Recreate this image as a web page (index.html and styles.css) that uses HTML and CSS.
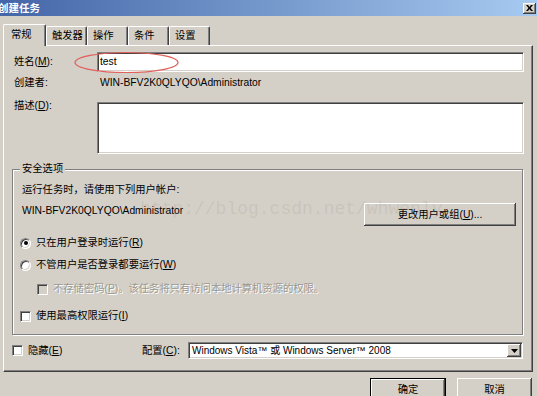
FILE: index.html
```html
<!DOCTYPE html>
<html lang="zh-CN">
<head>
    <meta charset="UTF-8">
    <meta name="viewport" content="width=device-width, initial-scale=1.0">
    <title>创建任务</title>
    <link rel="stylesheet" href="styles.css">
</head>
<body>
    <div class="window">
        <div class="titlebar">
            <span class="title">创建任务</span>
            <button class="close-btn" aria-label="关闭">
                <svg width="7" height="6" viewBox="0 0 7 6"><path d="M0 0h2l1.5 2L5 0h2L4.5 3 7 6H5L3.5 4 2 6H0l2.5-3z" fill="#000"/></svg>
            </button>
        </div>

        <div class="tabs">
            <div class="tab active">常规</div>
            <div class="tab">触发器</div>
            <div class="tab">操作</div>
            <div class="tab">条件</div>
            <div class="tab">设置</div>
        </div>

        <div class="panel">
            <div class="row name-row">
                <label class="label">姓名(<u>M</u>):</label>
                <div class="textbox latin">test</div>
            </div>
            <div class="row creator-row">
                <span class="label">创建者:</span>
                <span class="creator latin">WIN-BFV2K0QLYQO\Administrator</span>
            </div>
            <div class="row desc-row">
                <label class="label">描述(<u>D</u>):</label>
                <div class="textbox textarea"></div>
            </div>

            <fieldset class="group">
                <legend>安全选项</legend>
                <p class="hint">运行任务时，请使用下列用户帐户:</p>
                <div class="account-row">
                    <span class="account latin">WIN-BFV2K0QLYQO\Administrator</span>
                    <button class="btn change-btn">更改用户或组(<u>U</u>)...</button>
                </div>
                <div class="option opt-first"><span class="radio checked"></span>只在用户登录时运行(<u>R</u>)</div>
                <div class="option opt-second"><span class="radio"></span>不管用户是否登录都要运行(<u>W</u>)</div>
                <div class="option opt-disabled"><span class="checkbox disabled"></span>不存储密码(<u>P</u>)。该任务将只有访问本地计算机资源的权限。</div>
                <div class="option opt-last"><span class="checkbox"></span>使用最高权限运行(<u>I</u>)</div>
            </fieldset>

            <div class="footer-row">
                <div class="option hide-option"><span class="checkbox"></span>隐藏(<u>E</u>)</div>
                <label class="config-label">配置(<u>C</u>):</label>
                <div class="combo">
                    <span class="combo-text">Windows Vista™ 或 Windows Server™ 2008</span>
                    <span class="combo-btn">
                        <svg width="7" height="4" viewBox="0 0 7 4"><path d="M0 0h7L3.5 4z" fill="#000"/></svg>
                    </span>
                </div>
            </div>
        </div>

        <div class="dialog-buttons">
            <button class="btn default-btn">确定</button>
            <button class="btn">取消</button>
        </div>

        <div class="watermark">http://blog.csdn.net/whwenly</div>
        <svg class="annotation" width="108" height="24" viewBox="0 0 108 24">
            <ellipse cx="53.5" cy="11.5" rx="51.5" ry="10" fill="none" stroke="#e0625c" stroke-width="1.2"/>
        </svg>
    </div>
</body>
</html>
```

FILE: styles.css
```css
* {
    box-sizing: border-box;
}

body {
    margin: 0;
    width: 537px;
    height: 396px;
    overflow: hidden;
    background: #d4d0c8;
    font-family: "Liberation Sans", "Noto Sans CJK SC", sans-serif;
    font-size: 10.3px;
    line-height: 14px;
    color: #000;
}

.window {
    position: relative;
    height: 396px;
}

.latin {
    font-size: 10.3px;
}

u {
    text-decoration: underline;
}

/* title bar */

.titlebar {
    height: 16px;
    display: flex;
    align-items: center;
    justify-content: space-between;
    background: linear-gradient(90deg, #4466a8, #a6caf0);
}

.title {
    margin-left: -2px;
    color: #fff;
    font-weight: bold;
    font-size: 10.5px;
    line-height: 16px;
}

.close-btn {
    width: 13px;
    height: 11px;
    margin-right: 1px;
    padding: 0;
    border: none;
    background: #d4d0c8;
    box-shadow: inset -1px -1px #404040, inset 1px 1px #fff, inset -2px -2px #808080;
    display: flex;
    align-items: center;
    justify-content: center;
}

/* tabs */

.tabs {
    display: flex;
    align-items: flex-end;
    height: 21px;
    margin: 8px 0 0 3px;
}

.tab {
    width: 41px;
    height: 19px;
    padding-left: 5px;
    line-height: 18px;
    border-top: 1px solid #fff;
    border-left: 1px solid #fff;
    border-right: 1px solid #404040;
    border-radius: 2px 2px 0 0;
    box-shadow: inset -1px 0 #808080;
}

.tab.active {
    position: relative;
    z-index: 1;
    width: 43px;
    height: 22px;
    margin-bottom: -1px;
    padding-left: 7px;
    line-height: 20px;
    background: #d4d0c8;
}

/* main panel */

.panel {
    height: 327px;
    margin: 0 4px 0 3px;
    padding: 6px 8px 0 8px;
    border: 1px solid;
    border-color: #fff #404040 #404040 #fff;
    box-shadow: inset -1px -1px #808080;
}

.row {
    display: flex;
}

.label {
    flex: none;
    width: 83px;
    margin-left: 2px;
}

.textbox {
    flex: 1;
    height: 20px;
    padding: 0 2px;
    line-height: 18px;
    background: #fff;
    border: 1px solid;
    border-color: #808080 #fff #fff #808080;
    box-shadow: inset 1px 1px #404040, inset -1px -1px #d4d0c8;
}

.name-row {
    align-items: center;
}

.creator-row {
    align-items: center;
    height: 22px;
}

.creator {
    margin-left: 3px;
}

.desc-row {
    align-items: flex-start;
    margin-top: 8px;
}

.desc-row .label {
    margin-top: -3px;
}

.textarea {
    height: 52px;
}

/* security group */

.group {
    margin: 8px 1px 0 0;
    padding: 0 6px 10px 7px;
    min-width: 0;
    border: 1px solid #808080;
    box-shadow: inset 1px 1px #fff, 1px 1px #fff;
}

.group legend {
    padding: 0 2px;
    line-height: 14px;
    background: #d4d0c8;
}

.hint {
    margin: 7px 0 0 2px;
}

.account-row {
    display: flex;
    justify-content: space-between;
    align-items: flex-start;
    height: 23px;
    margin-top: 6px;
}

.account {
    margin: 1px 0 0 2px;
}

.btn {
    height: 23px;
    padding: 0;
    border: none;
    background: #d4d0c8;
    font: inherit;
    color: #000;
    box-shadow: inset -1px -1px #404040, inset 1px 1px #fff, inset -2px -2px #808080;
}

.change-btn {
    width: 152px;
}

.option {
    display: flex;
    align-items: center;
    height: 16px;
}

.opt-first {
    margin-top: 9px;
}

.opt-second {
    margin-top: 6px;
}

.opt-disabled {
    margin-top: 8px;
    padding-left: 17px;
    color: #9b9890;
    text-shadow: 1px 1px 0 #fff;
}

.opt-last {
    margin-top: 11px;
}

.radio,
.checkbox {
    flex: none;
    width: 11px;
    height: 11px;
    margin-right: 5px;
    background: #fff;
    border: 1px solid;
    border-color: #808080 #fff #fff #808080;
    box-shadow: inset 1px 1px #404040, inset -1px -1px #d4d0c8;
}

.radio {
    position: relative;
    border-radius: 50%;
}

.radio.checked::after {
    content: "";
    position: absolute;
    left: 2.5px;
    top: 2.5px;
    width: 4px;
    height: 4px;
    border-radius: 50%;
    background: #000;
}

.checkbox.disabled {
    background: #d4d0c8;
}

/* bottom of panel */

.footer-row {
    display: flex;
    align-items: center;
    height: 17px;
    margin-top: 7px;
}

.hide-option {
    width: 130px;
}

.config-label {
    width: 46px;
}

.combo {
    flex: 1;
    display: flex;
    align-items: center;
    justify-content: space-between;
    height: 17px;
    margin-right: 1px;
    padding: 0 1px 0 3px;
    background: #fff;
    border: 1px solid;
    border-color: #808080 #fff #fff #808080;
    box-shadow: inset 1px 1px #404040, inset -1px -1px #d4d0c8;
}

.combo-text {
    font-size: 10px;
}

.combo-btn {
    width: 14px;
    height: 13px;
    display: flex;
    align-items: center;
    justify-content: center;
    background: #d4d0c8;
    box-shadow: inset -1px -1px #404040, inset 1px 1px #fff, inset -2px -2px #808080;
}

/* dialog buttons */

.dialog-buttons {
    display: flex;
    justify-content: flex-end;
    gap: 11px;
    margin-top: 6px;
    padding-right: 5px;
}

.dialog-buttons .btn {
    width: 75px;
}

.dialog-buttons .default-btn {
    width: 76px;
    border: 1px solid #000;
}

/* overlays */

.watermark {
    position: absolute;
    left: 140px;
    top: 199px;
    font-family: "Liberation Mono", monospace;
    font-size: 18px;
    line-height: 20px;
    color: rgba(120, 114, 104, 0.14);
    pointer-events: none;
    white-space: nowrap;
}

.annotation {
    position: absolute;
    left: 73px;
    top: 51px;
    pointer-events: none;
}
```
